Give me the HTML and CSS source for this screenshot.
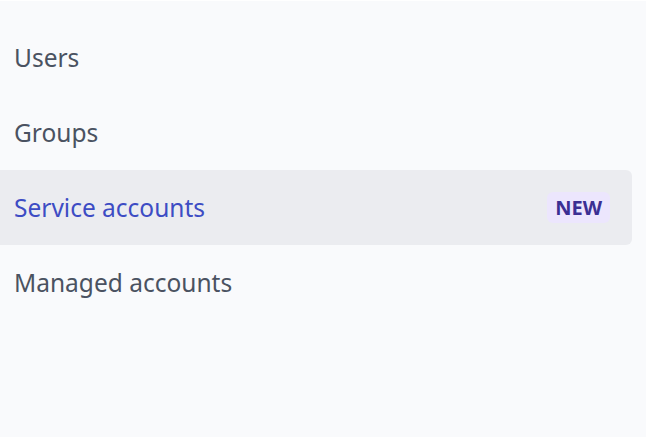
FILE: index.html
```html
<!DOCTYPE html>
<html lang="en">
<head>
  <meta charset="UTF-8" />
  <title>Accounts</title>
  <link rel="stylesheet" href="styles.css">
</head>
<body>
  <nav class="side-nav">
    <a class="nav-item" href="#">Users</a>
    <a class="nav-item" href="#">Groups</a>
    <a class="nav-item active" href="#">
      <span>Service accounts</span>
      <span class="badge">NEW</span>
    </a>
    <a class="nav-item" href="#">Managed accounts</a>
  </nav>
</body>
</html>
```

FILE: styles.css
```css
html, body {
  height: 100%;
}

body {
  margin: 0;
  background: #ffffff;
  font-family: 'Noto Sans', 'Open Sans', sans-serif;
}

.side-nav {
  box-sizing: border-box;
  height: calc(100% - 1px);
  margin: 1px 1px 0 0;
  background: #f9fafc;
  padding: 19px 14px 0 0;
  display: flex;
  flex-direction: column;
}

.nav-item {
  display: flex;
  align-items: center;
  justify-content: space-between;
  height: 75px;
  padding: 0 22px 0 14px;
  font-size: 24.5px;
  color: #4a5261;
  text-decoration: none;
  border-radius: 0 6px 6px 0;
}

.nav-item.active {
  background: #ebecf0;
  color: #3d4cc4;
}

.badge {
  background: #ece6fd;
  color: #3b2f93;
  font-weight: bold;
  font-size: 20px;
  padding: 2px 8px;
  border-radius: 6px;
}
```
